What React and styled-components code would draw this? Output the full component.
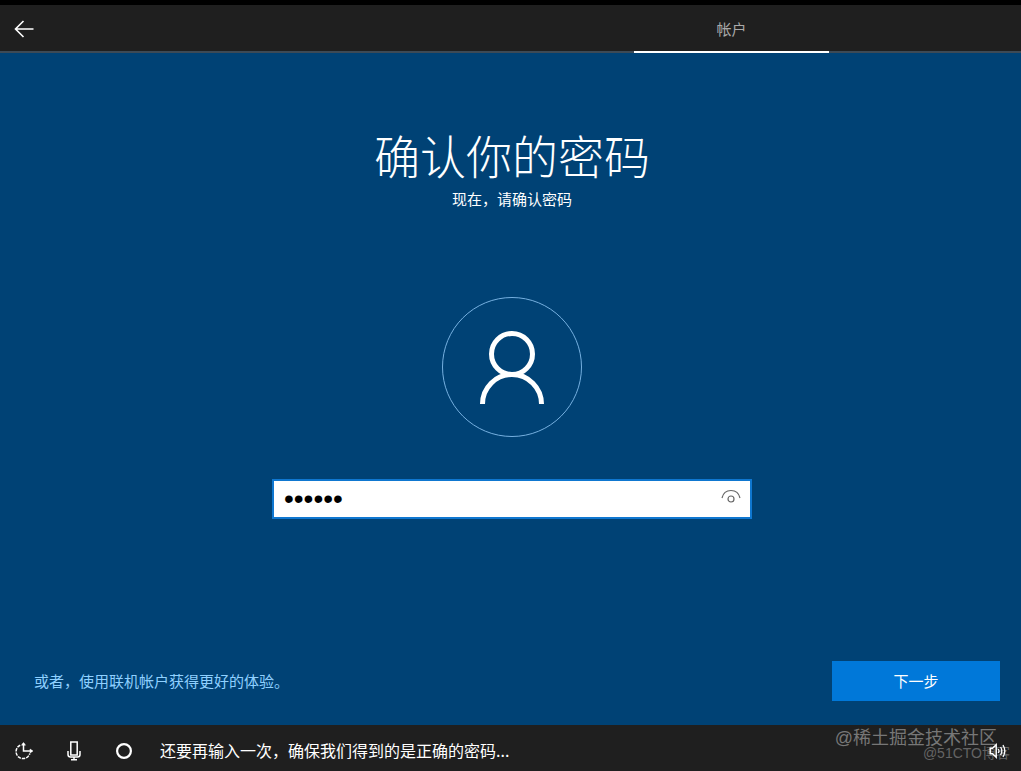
import { useState } from "react";
import styled, { createGlobalStyle } from "styled-components";

const GlobalStyle = createGlobalStyle`
* {
  box-sizing: border-box;
}
body {
  margin: 0;
  background: #004275;
}
button, input {
  font-family: inherit;
}
`

const Page = styled.div`
display: flex;
flex-direction: column;
min-height: 100vh;
border-top: 5px solid #000;
background: #004275;
color: #fff;
font-family: "Noto Sans CJK SC", sans-serif;
font-size: 15px;
`

const Header = styled.header`
display: flex;
justify-content: space-between;
height: 48px;
padding-right: 192px;
background: #1f1f1f;
box-shadow: inset 0 -2px 0 #3d4a56;
`

const IconButton = styled.button`
display: flex;
align-items: center;
justify-content: center;
width: 50px;
padding: 0 2px 0 0;
border: none;
background: none;
color: #fff;
cursor: pointer;
`

const Tab = styled.button`
width: 195px;
padding: 0;
border: none;
border-bottom: 2px solid #fff;
background: none;
color: #a8a8a8;
font-size: 15px;
cursor: pointer;
`

const Main = styled.main`
flex: 1;
display: flex;
flex-direction: column;
align-items: center;
padding: 70px 21px 24px 24px;
`

const Title = styled.h1`
margin: 0;
font-size: 46px;
font-weight: 300;
line-height: 62px;
`

const Subtitle = styled.p`
margin: 0;
line-height: 28px;
`

const Avatar = styled.div`
display: flex;
align-items: center;
justify-content: center;
width: 140px;
height: 140px;
margin: 84px 0 42px;
padding-top: 2px;
border: 1px solid #76b0e0;
border-radius: 50%;
`

const PasswordField = styled.div`
display: flex;
width: 100%;
max-width: 480px;
height: 40px;
border: 2px solid #0f77d0;
background: #fff;
`

const PasswordInput = styled.input`
flex: 1;
min-width: 0;
padding: 0 10px;
border: none;
outline: none;
background: none;
color: #000;
font-family: "Liberation Sans", sans-serif;
font-size: ${props => props.type === "password" ? "28px" : "17px"};
`

const RevealButton = styled(IconButton)`
width: 38px;
padding: 0 0 4px;
color: #666;
`

const Actions = styled.div`
display: flex;
align-items: center;
justify-content: space-between;
width: 100%;
margin-top: auto;
padding-left: 10px;
`

const OnlineLink = styled.a`
padding-bottom: 2px;
color: #8fd0ff;
text-decoration: none;
`

const NextButton = styled.button`
width: 168px;
height: 40px;
padding: 0 0 2px;
border: none;
background: #0078d9;
color: #fff;
font-size: 15px;
cursor: pointer;
`

const Footer = styled.footer`
position: relative;
display: flex;
height: 46px;
padding-top: 6px;
background: #1f1f1f;
`

const Caption = styled.p`
flex: 1;
margin: 0;
padding-left: 10px;
font-size: 16px;
line-height: 38px;
`

const Watermark = styled.span`
position: absolute;
right: ${props => props.$small ? "11px" : "24px"};
bottom: ${props => props.$small ? "6px" : "21px"};
color: ${props => props.$small ? "#646464" : "#777"};
font-family: "Liberation Sans", "Noto Sans CJK SC", sans-serif;
font-size: ${props => props.$small ? "14px" : "18px"};
line-height: 24px;
white-space: nowrap;
pointer-events: none;
`

const VolumeButton = styled(IconButton)`
position: relative;
z-index: 1;
padding: 0 0 0 4px;
`

const BackIcon = () => (
    <svg width="20" height="20" viewBox="0 0 20 20" fill="none" stroke="currentColor" strokeWidth="1.6">
        <path d="M19.5 10H1.5M9.5 2L1.5 10L9.5 18" />
    </svg>
)

const PersonIcon = () => (
    <svg width="66" height="74" viewBox="0 0 66 74" fill="none" stroke="currentColor" strokeWidth="5">
        <circle cx="33" cy="23" r="20.5" />
        <path d="M3.5 73A29.5 29.5 0 0 1 62.5 73" />
    </svg>
)

const EyeIcon = () => (
    <svg width="20" height="16" viewBox="0 0 20 16" fill="none" stroke="currentColor" strokeWidth="1.2">
        <path d="M1 9C2 4.5 5.5 1.5 10 1.5S18 4.5 19 9" />
        <circle cx="10" cy="10" r="3" />
    </svg>
)

const EaseIcon = () => (
    <svg width="20" height="18" viewBox="0 0 20 18" fill="none" stroke="currentColor" strokeWidth="1.5">
        <path d="M9.5 1V9H18" />
        <path d="M7.5 3.2L9.5 .5L11.5 3.2ZM16 7L19 9L16 11Z" fill="currentColor" strokeWidth=".5" />
        <path d="M6.2 3.2A7 7 0 1 0 15.8 11.5" strokeDasharray="3.4 1" />
    </svg>
)

const MicIcon = () => (
    <svg width="14" height="20" viewBox="0 0 14 20" fill="none" stroke="currentColor" strokeWidth="1.5">
        <rect x="3.8" y="1" width="6.4" height="13" />
        <path d="M1 10V13.5Q1 16 3.5 16H10.5Q13 16 13 13.5V10M7 16V19M4 18.7H10" />
    </svg>
)

const CortanaIcon = () => (
    <svg width="18" height="18" viewBox="0 0 18 18" fill="none" stroke="currentColor" strokeWidth="2.2">
        <circle cx="9" cy="9" r="6.9" />
    </svg>
)

const VolumeIcon = () => (
    <svg width="18" height="16" viewBox="0 0 18 16" fill="none" stroke="currentColor" strokeWidth="1.5">
        <path d="M1.2 5.2H3.5L7.2 1.8V14.2L3.5 10.8H1.2Z" />
        <path d="M9.3 6Q10.6 8 9.3 10M11.6 4Q14 8 11.6 12M14 2Q17.6 8 14 14" strokeWidth="1.3" />
    </svg>
)


const App = () => {
    const [password, setPassword] = useState("123456")
    const [visible, setVisible] = useState(false)

    return (
        <Page>
            <GlobalStyle />
            <Header>
                <IconButton type="button" aria-label="返回"><BackIcon /></IconButton>
                <Tab type="button" aria-current="step">帐户</Tab>
            </Header>

            <Main>
                <Title>确认你的密码</Title>
                <Subtitle id="hint">现在，请确认密码</Subtitle>
                <Avatar><PersonIcon /></Avatar>
                <PasswordField>
                    <PasswordInput
                        type={visible ? "text" : "password"}
                        aria-labelledby="hint"
                        value={password}
                        onChange={e => setPassword(e.target.value)}
                    />
                    <RevealButton type="button" aria-label="显示密码" onClick={() => setVisible(prev => !prev)}>
                        <EyeIcon />
                    </RevealButton>
                </PasswordField>
                <Actions>
                    <OnlineLink href="#online">或者，使用联机帐户获得更好的体验。</OnlineLink>
                    <NextButton type="button">下一步</NextButton>
                </Actions>
            </Main>

            <Footer>
                <IconButton type="button" aria-label="轻松使用"><EaseIcon /></IconButton>
                <IconButton type="button" aria-label="麦克风"><MicIcon /></IconButton>
                <IconButton type="button" aria-label="Cortana"><CortanaIcon /></IconButton>
                <Caption>还要再输入一次，确保我们得到的是正确的密码...</Caption>
                <Watermark>@稀土掘金技术社区</Watermark>
                <Watermark $small>@51CTO博客</Watermark>
                <VolumeButton type="button" aria-label="音量"><VolumeIcon /></VolumeButton>
            </Footer>
        </Page>
    )
}

export default App;
